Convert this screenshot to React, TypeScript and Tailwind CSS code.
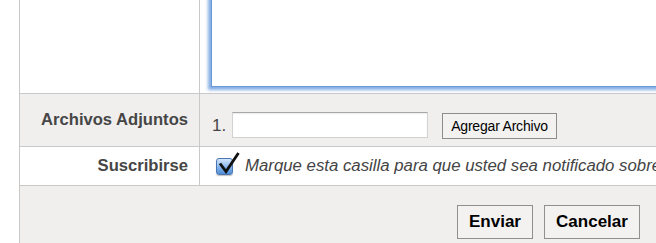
const LINE = "border-[#c9c9c9]";

function CheckBox() {
  return (
    <div className="relative h-[17px] w-[17px] shrink-0 rounded-[3px] border border-[#4a77b3] bg-gradient-to-b from-[#d6e7fa] via-[#8ab8ec] to-[#4f8cd6] shadow-[0_1px_1px_rgba(0,0,0,0.25)]">
      <svg
        className="absolute left-0 top-[-8px]"
        width="24"
        height="24"
        viewBox="0 0 24 24"
        fill="none"
      >
        <path
          d="M3 12.5 L9 20.5 L21.5 2"
          stroke="#111"
          strokeWidth="2.8"
          strokeLinejoin="miter"
        />
      </svg>
    </div>
  );
}

export default function App() {
  return (
    <div className="h-[243px] w-[656px] overflow-hidden bg-white font-['Liberation_Sans',Arial,sans-serif]">
      <div className={`ml-[19px] w-[637px] border-l ${LINE}`}>
        {/* message row */}
        <div className={`flex h-[94px] border-b ${LINE}`}>
          <div className={`w-[180px] shrink-0 border-r ${LINE}`} />
          <div className="flex-1">
            <div className="-mt-[40px] ml-[11px] h-[127px] w-[600px] border border-[#6a9ad6] bg-white shadow-[0_0_3px_3px_rgba(110,160,224,0.85)]" />
          </div>
        </div>

        {/* attachments row */}
        <div className={`flex h-[53px] border-b ${LINE} bg-[#f0efee]`}>
          <div
            className={`w-[180px] shrink-0 border-r ${LINE} pr-[11px] pt-[16px] text-right text-[16.6px] font-bold leading-[20px] text-[#464646]`}
          >
            Archivos Adjuntos
          </div>
          <div className="flex items-start pl-[12px] pt-[18px]">
            <span className="mt-[1px] w-[20px] text-[17px] leading-[26px] text-[#444]">
              1.
            </span>
            <input
              type="text"
              className="h-[26px] w-[196px] border border-[#d2d2d2] border-t-[#a8a8a8] bg-white shadow-[inset_0_1px_1px_rgba(0,0,0,0.08)] outline-none"
            />
            <button
              type="button"
              className="ml-[14px] mt-[1px] h-[26px] w-[115px] border border-[#8c8c8c] bg-[#f3f2f1] text-[14px] leading-none tracking-[-0.2px] text-black"
            >
              Agregar Archivo
            </button>
          </div>
        </div>

        {/* subscribe row */}
        <div className={`flex h-[39px] border-b ${LINE} bg-white`}>
          <div
            className={`flex w-[180px] shrink-0 items-center justify-end border-r ${LINE} pr-[11px] text-[16.6px] font-bold leading-[20px] text-[#464646]`}
          >
            Suscribirse
          </div>
          <div className="flex items-center pl-[16px]">
            <CheckBox />
            <span className="ml-[12px] whitespace-nowrap text-[16.8px] italic leading-[20px] text-[#444]">
              Marque esta casilla para que usted sea notificado sobre las
              respuestas
            </span>
          </div>
        </div>

        {/* actions */}
        <div className="flex h-[80px] items-start justify-end gap-[11px] bg-[#f0efee] pr-[16px] pt-[19px]">
          <button
            type="button"
            className="h-[34px] w-[76px] border border-[#8f8f8f] bg-[#f3f2f1] text-[17px] font-bold text-black"
          >
            Enviar
          </button>
          <button
            type="button"
            className="h-[34px] w-[96px] border border-[#8f8f8f] bg-[#f3f2f1] text-[17px] font-bold text-black"
          >
            Cancelar
          </button>
        </div>
      </div>
    </div>
  );
}
